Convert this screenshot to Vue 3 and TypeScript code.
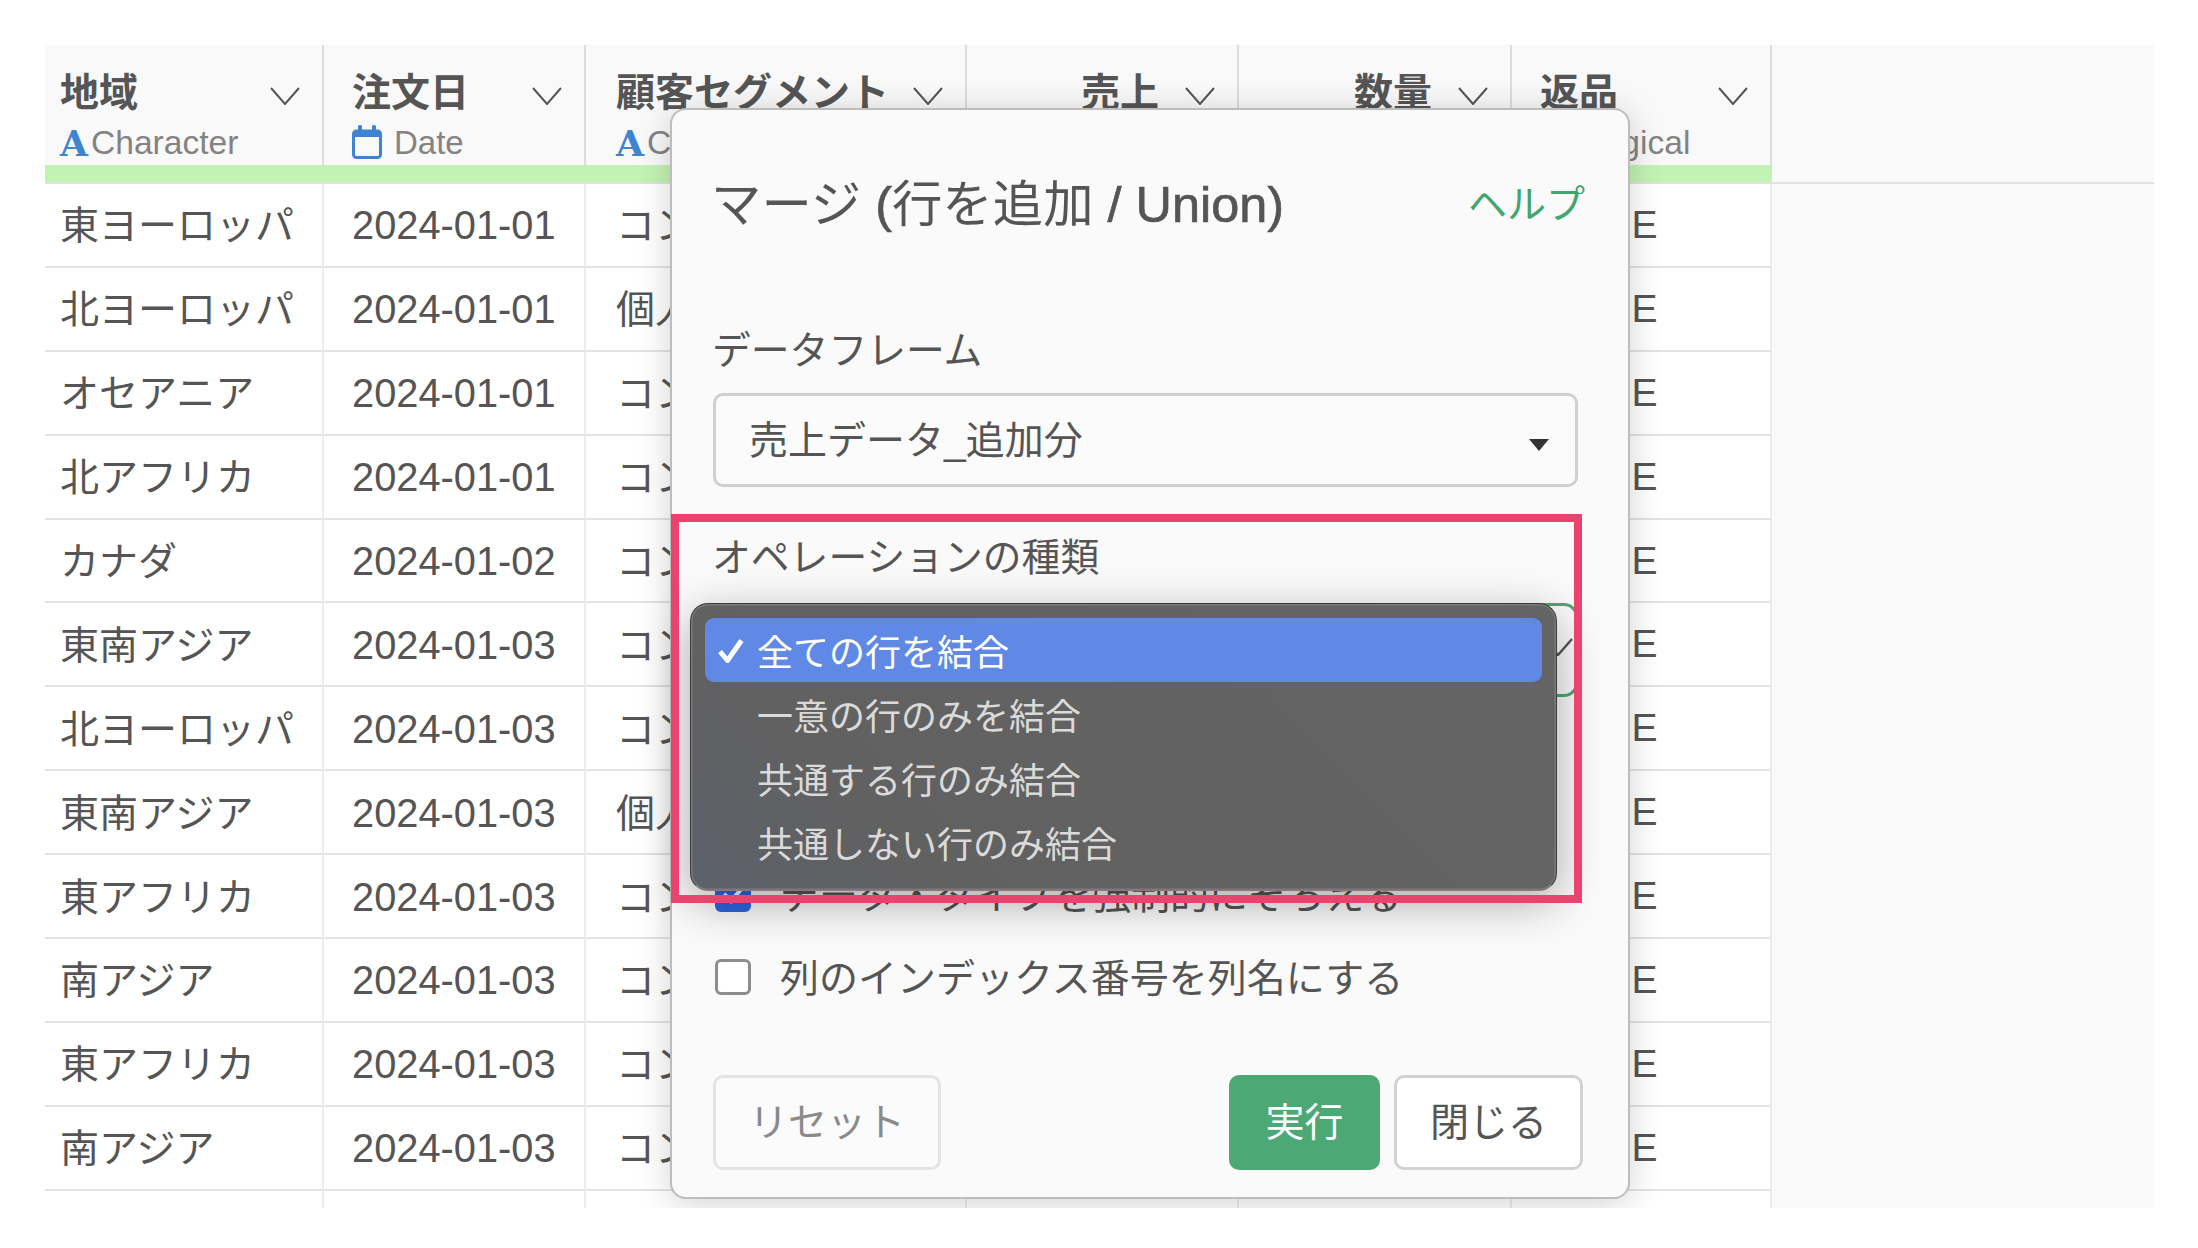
<script setup lang="ts">
interface Col { name: string; type: string; kind: 'chr' | 'date' | 'num' | 'lgl'; right?: boolean }
const cols: Col[] = [
  { name: '地域', type: 'Character', kind: 'chr' },
  { name: '注文日', type: 'Date', kind: 'date' },
  { name: '顧客セグメント', type: 'Character', kind: 'chr' },
  { name: '売上', type: '', kind: 'num', right: true },
  { name: '数量', type: '', kind: 'num', right: true },
  { name: '返品', type: 'Logical', kind: 'lgl' },
]
const rows: string[][] = [
  ['東ヨーロッパ', '2024-01-01', 'コンシューマー', '', '', 'FALSE'],
  ['北ヨーロッパ', '2024-01-01', '個人事業主', '', '', 'FALSE'],
  ['オセアニア', '2024-01-01', 'コンシューマー', '', '', 'FALSE'],
  ['北アフリカ', '2024-01-01', 'コンシューマー', '', '', 'FALSE'],
  ['カナダ', '2024-01-02', 'コンシューマー', '', '', 'FALSE'],
  ['東南アジア', '2024-01-03', 'コンシューマー', '', '', 'FALSE'],
  ['北ヨーロッパ', '2024-01-03', 'コンシューマー', '', '', 'FALSE'],
  ['東南アジア', '2024-01-03', '個人事業主', '', '', 'FALSE'],
  ['東アフリカ', '2024-01-03', 'コンシューマー', '', '', 'FALSE'],
  ['南アジア', '2024-01-03', 'コンシューマー', '', '', 'FALSE'],
  ['東アフリカ', '2024-01-03', 'コンシューマー', '', '', 'FALSE'],
  ['南アジア', '2024-01-03', 'コンシューマー', '', '', 'FALSE'],
  ['', '', '', '', '', ''],
]
const options = ['全ての行を結合', '一意の行のみを結合', '共通する行のみ結合', '共通しない行のみ結合']
</script>

<template>
  <div class="page">
    <div class="frame">
      <div class="table">
        <div class="head-row">
          <div v-for="(c, i) in cols" :key="i" class="hcell" :class="'c' + i">
            <div class="hname" :class="{ right: c.right }">
              <span>{{ c.name }}</span>
              <svg class="chev" viewBox="0 0 30 18" width="30" height="18">
                <path d="M1 1 L15 17 L29 1" fill="none" stroke="#555" stroke-width="2" />
              </svg>
            </div>
            <div class="htype">
              <span v-if="c.kind === 'chr'" class="ico-a">A</span>
              <svg v-else-if="c.kind === 'date'" class="ico-cal" viewBox="0 0 30 34" width="30" height="34">
                <rect x="1.5" y="6" width="27" height="26.5" rx="3" fill="none" stroke="#3d85d1" stroke-width="3" />
                <rect x="1.5" y="6" width="27" height="6" fill="#3d85d1" />
                <rect x="6" y="0" width="4" height="8" rx="1.5" fill="#3d85d1" />
                <rect x="20" y="0" width="4" height="8" rx="1.5" fill="#3d85d1" />
              </svg>
              <span v-else class="ico-blank" :class="c.kind"></span>
              <span :class="{ date: c.kind === 'date' }">{{ c.type }}</span>
            </div>
          </div>
        </div>
        <div class="green-row"><div class="green"></div></div>
        <div v-for="(r, ri) in rows" :key="ri" class="row">
          <div v-for="(v, ci) in r" :key="ci" class="cell" :class="'c' + ci">{{ v }}</div>
        </div>
      </div>

      <section class="modal">
        <header class="m-head">
          <h2 class="m-title">マージ <span class="latin">(</span>行を追加 <span class="latin">/ Union)</span></h2>
          <a class="m-help">ヘルプ</a>
        </header>
        <label class="m-label first">データフレーム</label>
        <div class="select">
          <span class="sel-text">売上データ_追加分</span>
          <i class="caret"></i>
        </div>
        <label class="m-label second">オペレーションの種類</label>
        <div class="select focus">
          <svg class="focus-chev" viewBox="0 0 30 18" width="30" height="18">
            <path d="M1 1 L15 17 L29 1" fill="none" stroke="#555" stroke-width="2.4" />
          </svg>
        </div>
        <div class="check-row top">
          <span class="box on">
            <svg viewBox="0 0 36 36" width="36" height="36"><path d="M9 18 L16 25 L28 11" fill="none" stroke="#fff" stroke-width="4" /></svg>
          </span>
          <span class="check-text">データ・タイプを強制的にそろえる</span>
        </div>
        <div class="check-row next">
          <span class="box"></span>
          <span class="check-text">列のインデックス番号を列名にする</span>
        </div>
        <footer class="m-foot">
          <button class="btn reset">リセット</button>
          <div class="foot-right">
            <button class="btn run">実行</button>
            <button class="btn close">閉じる</button>
          </div>
        </footer>
      </section>

      <ul class="menu">
        <li v-for="(o, i) in options" :key="i" class="opt" :class="{ sel: i === 0 }">
          <svg v-if="i === 0" class="tick" viewBox="0 0 26 24" width="26" height="24">
            <path d="M2 12.5 L9.5 21.5 L23.5 1.5" fill="none" stroke="#fff" stroke-width="5" />
          </svg>
          {{ o }}
        </li>
      </ul>

      <div class="pink"></div>
    </div>
  </div>
</template>

<style>
html, body { background: #fff; }
</style>

<style scoped>
.page {
  width: 2198px;
  height: 1248px;
  padding: 45px 44px 40px 45px;
  box-sizing: border-box;
  background: #fff;
  font-family: "Liberation Sans", "Noto Sans CJK JP", sans-serif;
  color: #555;
}
.frame {
  position: relative;
  height: 1163px;
  overflow: hidden;
  background: #f9f9f9;
}
.table { width: 100%; }
.head-row, .row {
  display: grid;
  grid-template-columns: 279px 262px 381px 272px 273px 260px;
}
.hcell {
  height: 120px;
  padding: 20px 0 0 28px;
  box-sizing: border-box;
  border-right: 2px solid #dcdcdc;
  overflow: hidden;
}
.hcell.c0 { padding-left: 15px; }
.hcell.c2 { padding-left: 30px; }
.hname {
  display: flex;
  align-items: center;
  box-sizing: border-box;
  height: 52px;
  padding-bottom: 5px;
  font-size: 39px;
  font-weight: 700;
  white-space: nowrap;
}
.hname.right { justify-content: flex-end; }
.chev {
  flex: none;
  margin: 14px 22px 0 auto;
}
.hname.right .chev { margin-left: 26px; }
.htype {
  display: flex;
  align-items: center;
  height: 40px;
  margin-top: 6px;
  font-size: 33.6px;
  color: #838383;
  white-space: nowrap;
}
.htype .date { font-size: 33px; }
.ico-a {
  width: 28px;
  margin-right: 3px;
  font-family: "DejaVu Serif", serif;
  font-weight: 700;
  font-size: 36px;
  line-height: 40px;
  color: #3d85d1;
}
.ico-cal { flex: none; margin-right: 12px; margin-top: -2px; }
.ico-blank { width: 28px; margin-right: 3px; }
.ico-blank.lgl { width: 41px; }
.green-row {
  height: 19px;
  box-sizing: border-box;
  border-bottom: 2px solid #e2e2e2;
}
.green { width: 1727px; height: 17px; background: #c3f3b4; }
.row { height: 83.9px; }
.cell {
  display: flex;
  align-items: center;
  box-sizing: border-box;
  padding-left: 28px;
  background: #fff;
  border-right: 2px solid #ececec;
  border-bottom: 2px solid #e3e3e3;
  font-size: 39px;
  white-space: nowrap;
  overflow: hidden;
}
.cell.c0 { padding-left: 15px; padding-bottom: 5px; }
.cell.c1 { padding-top: 2px; font-size: 39.8px; }
.cell.c2 { padding-left: 30px; padding-bottom: 5px; }
.cell.c5 { padding-left: 24px; }

.modal {
  position: absolute;
  left: 625px;
  top: 63px;
  width: 960px;
  height: 1091px;
  box-sizing: border-box;
  display: flex;
  flex-direction: column;
  padding: 0 45px 0 41px;
  background: #fafafa;
  border: 2px solid #bdbdbd;
  border-radius: 16px;
  box-shadow: 0 4px 34px rgba(0, 0, 0, 0.18);
}
.m-head {
  display: flex;
  align-items: center;
  justify-content: space-between;
  box-sizing: border-box;
  height: 74px;
  margin-top: 58px;
  padding-bottom: 9px;
}
.m-title {
  margin: 0 0 0 -2px;
  font-size: 50.4px;
  font-weight: 400;
  color: #555;
}
.latin { -webkit-text-stroke: 0.7px #555; }
.m-help {
  margin-right: -2px;
  font-size: 39px;
  color: #3fa66d;
}
.m-label {
  display: block;
  height: 54px;
  margin-left: -1px;
  line-height: 56px;
  font-size: 38.8px;
}
.m-label.first { margin-top: 81px; }
.m-label.second { margin-top: 43px; }
.select {
  position: relative;
  display: flex;
  align-items: center;
  flex: none;
  height: 94px;
  margin-top: 16px;
  margin-right: 5px;
  padding-left: 33px;
  box-sizing: border-box;
  border: 3px solid #d0d0d0;
  border-radius: 10px;
  background: #fbfbfb;
  font-size: 39px;
}
.sel-text { margin-bottom: 7px; }
.select.focus {
  margin-top: 19px;
  border: 3px solid #4ca874;
  border-radius: 14px;
}
.caret {
  position: absolute;
  right: 26px;
  top: 43px;
  width: 0;
  height: 0;
  border-left: 10.5px solid transparent;
  border-right: 10.5px solid transparent;
  border-top: 12px solid #333;
}
.focus-chev { position: absolute; left: 827px; top: 32px; }
.check-row {
  display: flex;
  align-items: center;
  gap: 29px;
  height: 36px;
  font-size: 39px;
  white-space: nowrap;
}
.check-text { margin-bottom: 5px; }
.check-row.top { margin-top: 179px; }
.check-row.next { margin-top: 47px; }
.box {
  flex: none;
  width: 36px;
  height: 36px;
  box-sizing: border-box;
  margin-left: 2px;
  border: 3px solid #8d8d8d;
  border-radius: 6px;
  background: #fff;
}
.box.on {
  border: none;
  background: #2b67e0;
}
.box.on svg { display: block; }
.m-foot {
  display: flex;
  align-items: center;
  justify-content: space-between;
  margin-top: 80px;
}
.foot-right { display: flex; gap: 14px; }
.btn {
  box-sizing: border-box;
  height: 95px;
  padding: 0 0 7px;
  border-radius: 10px;
  font-family: inherit;
  font-size: 39px;
}
.reset {
  width: 228px;
  border: 3px solid #e4e4e4;
  background: #fbfbfb;
  color: #8a8a8a;
}
.run {
  width: 151px;
  border: none;
  background: #4ca874;
  color: #fff;
}
.close {
  width: 189px;
  border: 3px solid #d2d2d2;
  background: #fff;
  color: #555;
}

.menu {
  position: absolute;
  left: 645px;
  top: 558px;
  width: 867px;
  height: 288px;
  margin: 0;
  padding: 14px 14px 0;
  box-sizing: border-box;
  list-style: none;
  border: 1px solid #3c3c3c;
  border-bottom-color: #7d7d7d;
  border-radius: 18px;
  background: linear-gradient(45deg, #5c606a 0%, #616161 22%, #646464 100%);
  box-shadow: inset 0 0 0 1.5px #7a7a7a, 0 12px 46px rgba(0, 0, 0, 0.32);
}
.opt {
  position: relative;
  display: flex;
  align-items: center;
  height: 64px;
  padding-left: 52px;
  border-radius: 9px;
  font-size: 36px;
  color: #dadada;
}
.opt.sel {
  background: #5f89e4;
  color: #fff;
}
.tick { position: absolute; left: 13px; top: 21px; }
.pink {
  position: absolute;
  left: 626px;
  top: 469px;
  width: 911px;
  height: 389px;
  box-sizing: border-box;
  border: 8px solid #ea436e;
  pointer-events: none;
}
</style>
